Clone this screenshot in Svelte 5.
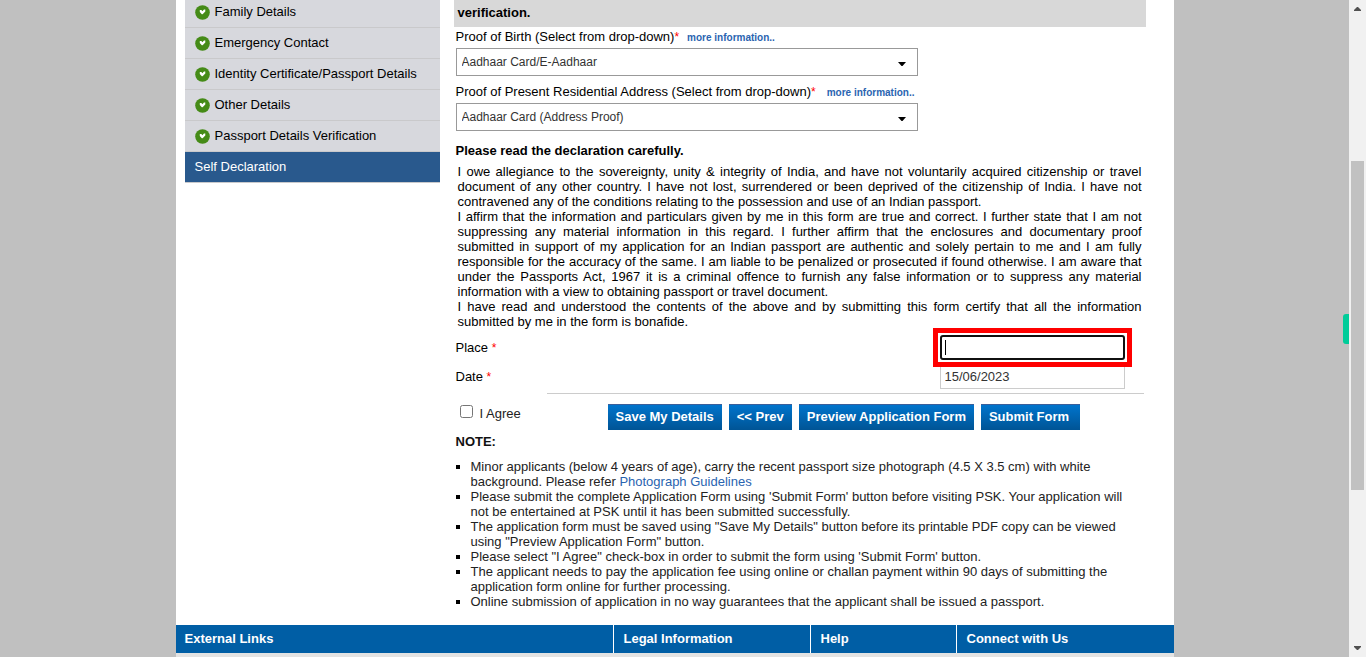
<script lang="ts">
  const steps = [
    'Family Details',
    'Emergency Contact',
    'Identity Certificate/Passport Details',
    'Other Details',
    'Passport Details Verification'
  ];

  const proofs = [
    {
      id: 'birth',
      label: 'Proof of Birth (Select from drop-down)',
      options: ['Aadhaar Card/E-Aadhaar']
    },
    {
      id: 'address',
      label: 'Proof of Present Residential Address (Select from drop-down)',
      options: ['Aadhaar Card (Address Proof)']
    }
  ];

  const declaration = [
    'I owe allegiance to the sovereignty, unity & integrity of India, and have not voluntarily acquired citizenship or travel document of any other country. I have not lost, surrendered or been deprived of the citizenship of India. I have not contravened any of the conditions relating to the possession and use of an Indian passport.',
    'I affirm that the information and particulars given by me in this form are true and correct. I further state that I am not suppressing any material information in this regard. I further affirm that the enclosures and documentary proof submitted in support of my application for an Indian passport are authentic and solely pertain to me and I am fully responsible for the accuracy of the same. I am liable to be penalized or prosecuted if found otherwise. I am aware that under the Passports Act, 1967 it is a criminal offence to furnish any false information or to suppress any material information with a view to obtaining passport or travel document.',
    'I have read and understood the contents of the above and by submitting this form certify that all the information submitted by me in the form is bonafide.'
  ];

  const notes = [
    `Please submit the complete Application Form using 'Submit Form' button before visiting PSK. Your application will not be entertained at PSK until it has been submitted successfully.`,
    `The application form must be saved using "Save My Details" button before its printable PDF copy can be viewed using "Preview Application Form" button.`,
    `Please select "I Agree" check-box in order to submit the form using 'Submit Form' button.`,
    'The applicant needs to pay the application fee using online or challan payment within 90 days of submitting the application form online for further processing.',
    'Online submission of application in no way guarantees that the applicant shall be issued a passport.'
  ];

  const footer = ['External Links', 'Legal Information', 'Help', 'Connect with Us'];

  let place = $state('');
  let date = $state('15/06/2023');
  let agreed = $state(false);
</script>

<div class="window">
  <div class="viewport">
    <div class="page">
      <div class="columns">
        <nav class="steps" aria-label="Form steps">
          {#each steps as step}
            <a class="step" href="#step">
              <svg width="15" height="15" viewBox="0 0 15 15" aria-hidden="true">
                <circle cx="7.5" cy="7.5" r="7.3" fill="#458b17" />
                <path d="M4.8 5h1.6l.9 1.2L9 4.6h1.3v1.9L7.6 9.3h-.8l-2-2.4z" fill="#fff" />
              </svg>
              <span>{step}</span>
            </a>
          {/each}
          <a class="step current" href="#step" aria-current="step"><span>Self Declaration</span></a>
        </nav>

        <main class="content">
          <div class="banner">verification.</div>

          {#each proofs as proof}
            <div class="proof">
              <div class="proof-label">
                <label for={proof.id}>{proof.label}<span class="req">*</span></label>
                <a class="more" href="#more">more information..</a>
              </div>
              <div class="select-wrap">
                <select id={proof.id}>
                  {#each proof.options as option}
                    <option>{option}</option>
                  {/each}
                </select>
                <svg class="arrow" width="8" height="4" viewBox="0 0 8 4" aria-hidden="true">
                  <path d="M0 0h8L4.5 4h-1z" />
                </svg>
              </div>
            </div>
          {/each}

          <h2 class="heading">Please read the declaration carefully.</h2>
          <div class="declaration">
            {#each declaration as text}
              <p>{text}</p>
            {/each}
          </div>

          <div class="field">
            <label for="place">Place <span class="req">*</span></label>
            <div class="input-wrap">
              <input id="place" class="active" type="text" bind:value={place} />
              <span class="caret"></span>
              <span class="highlight"></span>
            </div>
          </div>
          <div class="field">
            <label for="date">Date <span class="req">*</span></label>
            <div class="input-wrap">
              <input id="date" type="text" bind:value={date} />
            </div>
          </div>

          <hr />

          <div class="actions">
            <label class="agree"><input type="checkbox" bind:checked={agreed} />I Agree</label>
            <div class="buttons">
              <button>Save My Details</button>
              <button>&lt;&lt; Prev</button>
              <button>Preview Application Form</button>
              <button class="submit">Submit Form</button>
            </div>
          </div>

          <h2 class="note-heading">NOTE:</h2>
          <ul class="notes">
            <li>
              Minor applicants (below 4 years of age), carry the recent passport size photograph (4.5 X
              3.5 cm) with white background. Please refer <a href="#photo">Photograph Guidelines</a>
            </li>
            {#each notes as note}
              <li>{note}</li>
            {/each}
          </ul>
        </main>
      </div>

      <footer>
        <div class="footer-titles">
          {#each footer as title}
            <h3>{title}</h3>
          {/each}
        </div>
        <div class="footer-body"></div>
      </footer>
    </div>
    <span class="side-tab"></span>
  </div>

  <div class="scrollbar" aria-hidden="true">
    <svg width="17" height="17" viewBox="0 0 17 17"><path d="M5 11h7v-1L9 7H8L5 10z" /></svg>
    <div class="before"></div>
    <div class="thumb"></div>
    <div class="after"></div>
    <svg width="17" height="17" viewBox="0 0 17 17"><path d="M5 6h7v1l-3 3H8L5 7z" /></svg>
  </div>
</div>

<style>
  :global(body) {
    margin: 0;
    background: #c0c0c0;
  }

  .window {
    display: flex;
    height: 100vh;
    overflow: hidden;
    font-family: 'Liberation Sans', Arial, sans-serif;
    font-size: 13px;
    line-height: 15px;
    color: #000;
  }
  .viewport {
    position: relative;
    flex: 1;
    min-width: 0;
    overflow: hidden;
  }
  .page {
    max-width: 998px;
    margin: -3px auto 0;
    background: #fff;
  }
  a {
    color: #2a64b0;
    text-decoration: none;
  }
  h2,
  h3,
  p {
    margin: 0;
    font-size: 13px;
  }

  .columns {
    display: flex;
    align-items: flex-start;
    gap: 14px;
    padding: 0 28px 16px 9px;
  }
  .steps {
    flex: 0 0 255px;
  }
  .step {
    display: flex;
    align-items: center;
    gap: 5px;
    height: 30px;
    padding-left: 10px;
    border-bottom: 1px solid #c9c9cb;
    background: #d7d8dd;
    color: #000;
  }
  .step span {
    padding-bottom: 2px;
  }
  .current {
    background: #29598d;
    color: #fff;
  }

  .content {
    flex: 1;
    min-width: 0;
  }
  .banner {
    padding: 8px 4px 7px;
    background: #d8d8d8;
    font-weight: bold;
  }
  .proof {
    padding: 0 2px;
    margin-bottom: 6px;
  }
  .proof-label {
    display: flex;
    align-items: center;
    gap: 8px;
    height: 19px;
    padding-bottom: 2px;
  }
  .proof:nth-of-type(3) .proof-label {
    gap: 11px;
  }
  .req {
    color: #f00;
    font-size: 12px;
  }
  .more {
    padding-top: 2px;
    font-size: 10px;
    font-weight: bold;
  }
  .select-wrap {
    position: relative;
    width: 462px;
  }
  select {
    display: block;
    width: 100%;
    height: 28px;
    padding: 0 5px;
    appearance: none;
    border: 1px solid #999;
    border-radius: 0;
    background: #fff;
    color: #333;
    font-family: inherit;
    font-size: 12px;
  }
  .arrow {
    position: absolute;
    right: 12px;
    top: 14px;
    pointer-events: none;
  }

  .heading {
    padding: 6px 2px;
  }
  .declaration {
    padding: 0 4px;
    text-align: justify;
  }

  .field {
    display: flex;
    align-items: center;
    justify-content: space-between;
    height: 29px;
    padding: 0 21px 0 2px;
  }
  .declaration + .field {
    margin-top: 4px;
  }
  .input-wrap {
    position: relative;
    width: 185px;
  }
  .field input {
    display: block;
    box-sizing: border-box;
    width: 100%;
    height: 25px;
    padding: 0 4px;
    border: 1px solid #ccc;
    color: #333;
    font-family: inherit;
    font-size: 13px;
  }
  .field .active {
    border: 2px solid #101010;
    border-radius: 3px;
    outline: none;
  }
  .caret {
    position: absolute;
    left: 5px;
    top: 5px;
    width: 1px;
    height: 15px;
    background: #000;
  }
  .highlight {
    position: absolute;
    inset: -7px;
    border: 5px solid #f00;
    pointer-events: none;
    z-index: 1;
  }

  hr {
    height: 1px;
    margin: 2px 2px 10px 93px;
    border: 0;
    background: #ccc;
  }
  .actions {
    display: flex;
    align-items: flex-start;
    color: #222;
  }
  .agree {
    display: flex;
    align-items: flex-start;
    flex: 0 0 154px;
    line-height: 19px;
  }
  .agree input {
    width: 13px;
    height: 13px;
    margin: 1px 7px 0 6px;
  }
  .buttons {
    display: flex;
    gap: 7px;
  }
  button {
    height: 26px;
    padding: 0 8px 2px;
    border: 0;
    border-top: 1px solid #3a5f9a;
    background: linear-gradient(#0074cc, #005495);
    color: #fff;
    font-family: inherit;
    font-size: 13px;
    font-weight: bold;
  }
  .submit {
    padding-right: 11px;
  }

  .note-heading {
    padding: 4px 2px 10px;
    color: #111;
  }
  .notes {
    margin: 0;
    padding: 0 20px 0 17px;
    list-style: square;
    color: #222;
  }
  .notes li::marker {
    color: #000;
  }

  .footer-titles {
    display: grid;
    grid-template-columns: 437fr 196fr 145fr 217fr;
    gap: 1px;
  }
  h3 {
    padding: 6px 10px 7px;
    background: #005ea5;
    color: #fff;
  }
  h3:first-child {
    padding-left: 9px;
  }
  .footer-body {
    height: 120px;
    background: #e3e3e3;
  }

  .side-tab {
    position: absolute;
    right: 0;
    top: 314px;
    width: 6px;
    height: 30px;
    border-radius: 3px 0 0 3px;
    background: #00cc99;
  }

  .scrollbar {
    display: flex;
    flex-direction: column;
    flex: 0 0 17px;
    background: #f1f1f1;
    fill: #505050;
  }
  .scrollbar svg {
    flex: none;
  }
  .before {
    flex: 144;
  }
  .thumb {
    flex: 329;
    margin: 0 2px;
    background: #c1c1c1;
  }
  .after {
    flex: 150;
  }
</style>
